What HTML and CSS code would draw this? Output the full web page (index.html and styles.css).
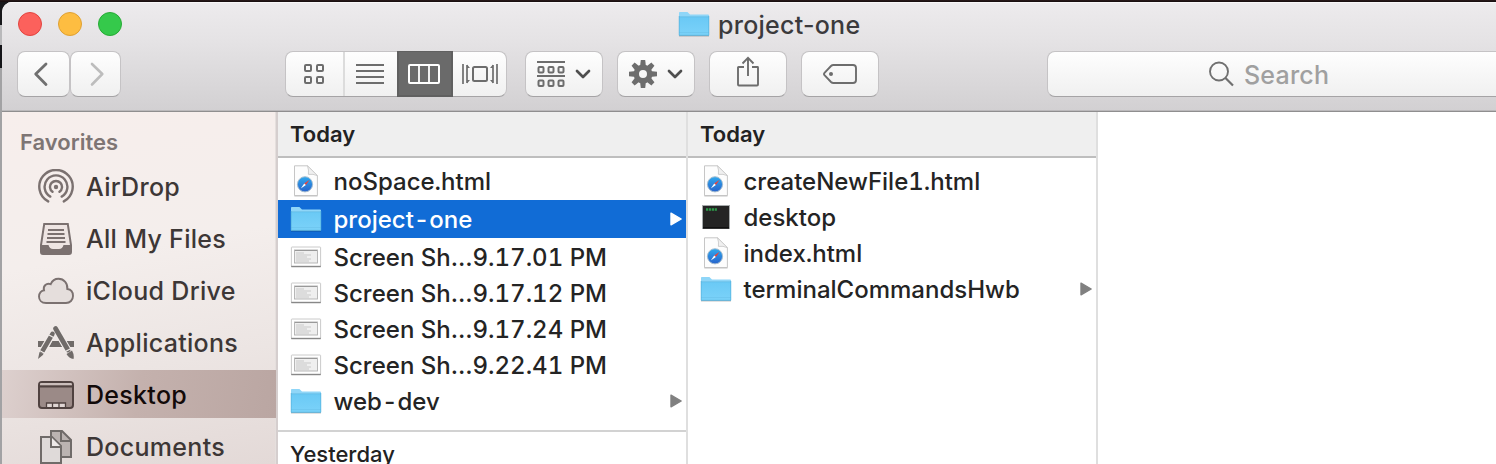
FILE: index.html
```
<!DOCTYPE html>
<html lang="en">
<head>
<meta charset="utf-8">
<title>project-one</title>
<link rel="stylesheet" href="styles.css">
</head>
<body>
<svg class="defs" width="0" height="0" aria-hidden="true">
  <defs>
    <linearGradient id="folderFill" x1="0" y1="0" x2="0" y2="1"><stop offset="0" stop-color="#6ac9f5"/><stop offset="1" stop-color="#7bd2f9"/></linearGradient>
    <linearGradient id="compassFill" x1="0" y1="0" x2="0" y2="1"><stop offset="0" stop-color="#2fa9ee"/><stop offset="1" stop-color="#2763cc"/></linearGradient>
  </defs>
  <symbol id="folder" viewBox="0 0 32 26">
    <path d="M1 24.5V1.8Q1 1 1.800 1H9.400L12 3.600H30Q31 3.600 31 4.600V24.500Z" fill="#8fd6f8"/>
    <path d="M1 6H31V24Q31 24.600 30.400 24.600H1.600Q1 24.600 1 24Z" fill="url(#folderFill)"/>
    <path d="M1 5.800H31" stroke="#5cb9e4" stroke-width=".7"/>
    <path d="M1 21.600H31" stroke="#68c0ea" stroke-width=".6"/>
    <path d="M1.200 5V24.300H30.800V5" fill="none" stroke="#55b2dd" stroke-width=".7"/>
    <path d="M1 25.100H31" stroke="#000" stroke-opacity=".25" stroke-width=".8"/>
  </symbol>
  <symbol id="html" viewBox="0 0 32 32">
    <path d="M4.500 .8H17.500L27.400 10.600V30.600H4.500Z" fill="#fdfdfd" stroke="#c6c6c6" stroke-width="1"/>
    <path d="M17.500 .8Q19 5 18.400 9.400Q23 8.700 27.400 10.600Z" fill="#f0f0f0" stroke="#c9c9c9" stroke-width=".9"/>
    <path d="M4.400 31H27.500" stroke="#bbb" stroke-width=".8"/>
    <circle cx="15" cy="19.300" r="7.600" fill="url(#compassFill)" stroke="#a9bfd1" stroke-width="1"/>
    <path d="M19.600 14.800L15.900 20.100L14.200 18.400Z" fill="#e9433c"/>
    <path d="M10.800 23.600L14.200 18.400L15.900 20.100Z" fill="#fff"/>
  </symbol>
  <symbol id="terminal" viewBox="0 0 32 26">
    <rect x="2.500" y="1.500" width="27" height="23" fill="#242424" stroke="#a6aaab"/>
    <path d="M3 24H29" stroke="#0b0b0b" stroke-width="1.400"/>
    <path d="M6 5.500H17" stroke="#2d9b49" stroke-width="2.400" stroke-dasharray="2.200 .7"/>
  </symbol>
  <symbol id="shot" viewBox="0 0 32 22">
    <rect x="1.400" y="1" width="29.200" height="19.600" rx=".6" fill="#fff" stroke="#c4c4c4" stroke-width=".9"/>
    <path d="M1.200 20.500H30.800" stroke="#888" stroke-width="1.400"/>
    <rect x="4.500" y="4" width="23" height="13" fill="#efefef" stroke="#b0b0b0" stroke-width=".9"/>
    <path d="M5 4.500H27" stroke="#999" stroke-width="1"/>
    <path d="M6 7H14M6 9H21M6 11H17M6 13H21M6 15H19" stroke="#c9c9c9" stroke-width="1"/>
  </symbol>
  <symbol id="arrow" viewBox="0 0 12 14"><path d="M1 1.200V12.800L11.200 7Z" fill="currentColor" stroke="currentColor" stroke-width="1.400" stroke-linejoin="round"/></symbol>
  <symbol id="chev" viewBox="0 0 16 10"><path d="M2 2L8 8L14 2" fill="none" stroke="#4f4f4f" stroke-width="2.700" stroke-linecap="round" stroke-linejoin="round"/></symbol>
</svg>

<main class="window">
  <header class="chrome">
    <div class="titlebar">
      <div class="lights"><i class="light close"></i><i class="light min"></i><i class="light max"></i></div>
      <svg class="title-icon" width="32" height="26"><use href="#folder"/></svg>
      <h1 class="title">project-one</h1>
    </div>
    <div class="toolbar">
      <button class="btn back"><svg width="51" height="44" viewBox="0 0 51 44"><path d="M28 12L17.700 22L28 32.500" fill="none" stroke="#707070" stroke-width="2.800" stroke-linecap="round" stroke-linejoin="round"/></svg></button>
      <button class="btn forward"><svg width="49" height="44" viewBox="0 0 49 44"><path d="M21 12L31.300 22L21 32.500" fill="none" stroke="#bdbdbd" stroke-width="2.600" stroke-linecap="round" stroke-linejoin="round"/></svg></button>
      <div class="segments">
        <span class="seg s1"><svg width="22" height="22" viewBox="0 0 22 22" fill="none" stroke="#6d6d6d" stroke-width="2"><rect x="2" y="2" width="6" height="6" rx="1"/><rect x="14" y="2" width="6" height="6" rx="1"/><rect x="2" y="14" width="6" height="6" rx="1"/><rect x="14" y="14" width="6" height="6" rx="1"/></svg></span>
        <span class="seg s2"><svg width="28" height="20" viewBox="0 0 28 20" stroke="#6d6d6d" stroke-width="2"><path d="M0 1H28M0 7H28M0 13H28M0 19H28"/></svg></span>
        <span class="seg s3"><svg width="32" height="20" viewBox="0 0 32 20" fill="none" stroke="#fff" stroke-width="2"><rect x="1" y="1" width="30" height="18" rx="1"/><path d="M11 1V19M21 1V19" stroke-width="1.800"/></svg></span>
        <span class="seg s4"><svg width="36" height="20" viewBox="0 0 36 20" fill="none" stroke="#6d6d6d" stroke-width="2"><path d="M1 0V20M5 1V19M31 1V19M35 0V20" stroke-width="1.700"/><path d="M5 .5L8 4H5ZM5 19.500L8 16H5ZM31 .5L28 4H31ZM31 19.500L28 16H31Z" fill="#6d6d6d" stroke="none"/><rect x="11" y="3" width="14" height="14" rx="1.500"/></svg></span>
      </div>
      <button class="btn wide arrange"><svg width="28" height="26" viewBox="0 0 28 26" fill="none" stroke="#6d6d6d" stroke-width="2"><path d="M0 1H28M0 15H28"/><rect x="1.500" y="6" width="5" height="5.500" rx="1"/><rect x="11.500" y="6" width="5" height="5.500" rx="1"/><rect x="21.500" y="6" width="5" height="5.500" rx="1"/><rect x="1.500" y="19.500" width="5" height="5.500" rx="1"/><rect x="11.500" y="19.500" width="5" height="5.500" rx="1"/><rect x="21.500" y="19.500" width="5" height="5.500" rx="1"/></svg><svg width="16" height="10"><use href="#chev"/></svg></button>
      <button class="btn wide action"><svg width="28" height="28" viewBox="-14 -14 28 28"><g fill="#6d6d6d"><path id="tooth" d="M-3 -7L-2.200 -14H2.200L3 -7Z"/><use href="#tooth" transform="rotate(45)"/><use href="#tooth" transform="rotate(90)"/><use href="#tooth" transform="rotate(135)"/><use href="#tooth" transform="rotate(180)"/><use href="#tooth" transform="rotate(225)"/><use href="#tooth" transform="rotate(270)"/><use href="#tooth" transform="rotate(315)"/></g><circle r="6.700" fill="none" stroke="#6d6d6d" stroke-width="5.400"/></svg><svg width="16" height="10"><use href="#chev"/></svg></button>
      <button class="btn wide share"><svg width="24" height="32" viewBox="0 0 24 32" fill="none" stroke="#6d6d6d" stroke-width="1.900"><path d="M8 11H2.500Q2 11 2 11.500V28.500Q2 29.500 3 29.500H21Q22 29.500 22 28.500V11.500Q22 11 21.500 11H16M12 20V2M6.500 7.500L12 1.800L17.500 7.500"/></svg></button>
      <button class="btn wide tag"><svg width="34" height="20" viewBox="0 0 34 20" fill="none" stroke="#6d6d6d" stroke-width="1.900"><path d="M10.500 1H30Q33 1 33 4V16Q33 19 30 19H10.500Q9 19 8 18L1.500 11.200Q.5 10 1.500 8.800L8 2Q9 1 10.500 1Z"/><circle cx="8" cy="10" r="2" fill="#6d6d6d" stroke="none"/></svg></button>
      <div class="search"><svg width="25" height="26" viewBox="0 0 25 26" fill="none" stroke="#707070" stroke-width="1.900"><circle cx="10" cy="10.500" r="9"/><path d="M16.500 17L24 24.500" stroke-width="2.200"/></svg><span>Search</span></div>
    </div>
  </header>

  <div class="body">
    <nav class="sidebar">
      <h2>Favorites</h2>
      <a class="side"><svg width="36" height="36" viewBox="0 0 36 36" fill="none" stroke="#7b7170" stroke-width="2.400" stroke-linecap="round"><circle cx="18" cy="18" r="2.200" fill="#7b7170" stroke="none"/><path d="M14.500 22.800A6 6 0 1 1 21.500 22.800M12.300 27.600A11.400 11.400 0 1 1 23.700 27.600M10.200 32.400A16.700 16.700 0 1 1 25.800 32.400"/></svg>AirDrop</a>
      <a class="side"><svg width="36" height="36" viewBox="0 0 36 36"><path d="M6.200 3H29.800L33 24V31Q33 33 31 33H5Q3 33 3 31V24Z" fill="#eee5e3" stroke="#7b7170" stroke-width="2"/><path d="M3 24H10.500Q11.500 28 15 28H21Q24.500 28 25.500 24H33V31Q33 33 31 33H5Q3 33 3 31Z" fill="#7b7170"/><path d="M10 9H26M9.500 13H26.500M9 17H27M8.500 21H27.500" stroke="#7b7170" stroke-width="1.900"/></svg>All My Files</a>
      <a class="side"><svg width="36" height="36" viewBox="0 0 36 36"><path d="M8 30C3.500 30 1 27 1 23.500C1 20 3.500 17.500 6 17.300C4.800 13 8.500 9.500 12.700 11.200C14.500 7 17.500 5.800 20.500 5.800C26 5.800 30 10.500 29.300 16C33 16.500 35 19.500 35 22.900C35 27 32 30 28 30Z" fill="#e5dedc" stroke="#7b7170" stroke-width="1.900"/></svg>iCloud Drive</a>
      <a class="side"><svg width="36" height="36" viewBox="0 0 36 36"><path d="M0 16H36V22H0Z" fill="#706b69"/><path d="M8 16H28L32 23H4Z" fill="#f1ebe9"/><path d="M14 16H21L24.500 22H11Z" fill="#706b69"/><path d="M15.500 7L3.800 27.500M17.500 3.500L30.500 26" stroke="#f1ebe9" stroke-width="7"/><path d="M14.500 8.800L4.200 26.500" stroke="#706b69" stroke-width="4.500" stroke-linecap="round"/><path d="M17.500 3.500L30 25" stroke="#706b69" stroke-width="4.800" stroke-linecap="round"/><path d="M1.500 27L5.500 29.500L0 34ZM28.500 29L34 25.500Q36.500 30 35.500 34Q31 33.500 28.500 29Z" fill="#706b69"/><path d="M11 10L16.500 13M26.500 27L33 23.500M1.500 25.500L7 28.500" stroke="#f0ebe9" stroke-width="1.300"/></svg>Applications</a>
      <a class="side active"><svg width="36" height="36" viewBox="0 0 36 36"><rect x="1" y="5" width="34" height="26" rx="3" fill="#9b8a87" stroke="#504240" stroke-width="2"/><path d="M2 7Q2 6 3 6H33Q34 6 34 8H2Z" fill="#cbbebb"/><path d="M1 9.500H35" stroke="#504240" stroke-width="2"/><path d="M9 26H27V30H9Z" fill="#e0d5d3"/><path d="M8.500 31V26H27.500V31M14.500 26V30M21 26V30" fill="none" stroke="#504240" stroke-width="1.300"/></svg>Desktop</a>
      <a class="side"><svg width="36" height="36" viewBox="0 0 36 36" stroke="#706b69" stroke-width="2"><path d="M13 2H24L33 11V28H13Z" fill="#bbb3b1"/><path d="M23 2V12H33" fill="none"/><path d="M3 8H14L23 17V34H3Z" fill="#dfdad9"/><path d="M13 8V18H23" fill="#eee9e8"/></svg>Documents</a>
    </nav>

    <section class="column">
      <h2 class="group">Today</h2>
      <ul>
        <li><svg width="32" height="32"><use href="#html"/></svg><span>noSpace.html</span></li>
        <li class="selected"><svg width="32" height="26"><use href="#folder"/></svg><span>project-one</span><svg class="more" width="12" height="14"><use href="#arrow"/></svg></li>
        <li><svg width="32" height="22"><use href="#shot"/></svg><span class="shot">Screen Sh…9.17.01 PM</span></li>
        <li><svg width="32" height="22"><use href="#shot"/></svg><span class="shot">Screen Sh…9.17.12 PM</span></li>
        <li><svg width="32" height="22"><use href="#shot"/></svg><span class="shot">Screen Sh…9.17.24 PM</span></li>
        <li><svg width="32" height="22"><use href="#shot"/></svg><span class="shot">Screen Sh…9.22.41 PM</span></li>
        <li><svg width="32" height="26"><use href="#folder"/></svg><span>web-dev</span><svg class="more" width="12" height="14"><use href="#arrow"/></svg></li>
      </ul>
      <h2 class="group older">Yesterday</h2>
    </section>

    <section class="column">
      <h2 class="group">Today</h2>
      <ul>
        <li><svg width="32" height="32"><use href="#html"/></svg><span>createNewFile1.html</span></li>
        <li><svg width="32" height="26"><use href="#terminal"/></svg><span>desktop</span></li>
        <li><svg width="32" height="32"><use href="#html"/></svg><span>index.html</span></li>
        <li><svg width="32" height="26"><use href="#folder"/></svg><span>terminalCommandsHwb</span><svg class="more" width="12" height="14"><use href="#arrow"/></svg></li>
      </ul>
    </section>
    <section class="preview"></section>
  </div>
</main>
</body>
</html>
```
FILE: styles.css
```
* { box-sizing: border-box; }
html, body { margin: 0; height: 100%; overflow: hidden; }
body {
  padding: 2px 0 0 2px;
  background:
    linear-gradient(#2a1a1b, #140b0d) 0 0 / 100% 2px no-repeat,
    linear-gradient(#18181b 0 25px, #b9b9bb 25px 45px, #141418 45px 68px, #a2a2a4 68px) 0 0 / 20px 100% no-repeat,
    #2a1a1b;
  font-family: Inter, "Liberation Sans", sans-serif;
  color: #222;
}
.defs { position: absolute; }
svg { display: block; flex: none; }
h1, h2, ul { margin: 0; padding: 0; font-weight: 400; }

.window { height: 462px; display: flex; flex-direction: column; border-top-left-radius: 10px; overflow: hidden; background: #fff; }
.chrome {
  height: 110px; flex: none;
  background: linear-gradient(#edebed, #e5e3e5 35%, #d2d0d2);
  border-bottom: 1px solid #8f8e8f;
  box-shadow: inset 0 1px #f8f7f8, inset 0 -1px #bbb9bb;
}
.titlebar { height: 49px; display: flex; align-items: flex-start; padding: 10px 0 0 16px; }
.lights { display: flex; gap: 16px; width: 660px; }
.light { width: 24px; height: 24px; border-radius: 50%; border: 1px solid; }
.close { background: #fc615c; border-color: #e2443f; }
.min { background: #fdbd41; border-color: #dfa033; }
.max { background: #35c94b; border-color: #27aa35; }
.title-icon { margin-top: -1px; }
.title { margin-left: 8px; font-size: 25px; line-height: 30px; margin-top: -2px; color: #3b3a3c; letter-spacing: .25px; font-weight: 450; }

.toolbar { display: flex; padding-left: 15px; overflow: hidden; }
.btn, .segments, .search {
  height: 46px; flex: none; padding: 0; border: 1px solid #c5c3c5; border-bottom-color: #a5a3a5; border-radius: 8px;
  background: linear-gradient(#fefefe, #f0f0f0); display: flex; align-items: center; justify-content: center;
}
.back { width: 53px; }
.forward { width: 51px; }
.segments { width: 222px; margin-left: 164px; justify-content: flex-start; }
.seg { height: 44px; display: flex; align-items: center; justify-content: center; }
.s1 { width: 59px; border-right: 2px solid #dcdcdc; padding-right: 1px; }
.s2 { width: 52px; padding-right: 2px; }
.s3 { width: 56px; height: 46px; margin: -1px 0; background: #6a6a6a; border: 2px solid #606060; border-top-width: 1px; padding-right: 2px; }
.s4 { width: 53px; }
.wide { width: 78px; margin-left: 14px; }
.arrange { margin-left: 18px; gap: 10px; }
.action { gap: 10px; }
.share svg { margin-top: -4px; }
.search { width: 480px; margin-left: 168px; justify-content: flex-start; padding-left: 161px; color: #a0a0a0; font-size: 25px; letter-spacing: .2px; gap: 10px; }
.search span { margin-top: 2px; font-weight: 450; }

.body { display: flex; flex: 1; min-height: 0; }
.sidebar {
  width: 276px; flex: none; border-right: 2px solid #d5cece; overflow: hidden;
  background: linear-gradient(170deg, #f7eeec 0, #f4eeec 40%, #ece5e3 70%, #e3d9d7 100%);
  box-shadow: inset -1px 0 #e5dfdd;
}
.sidebar h2 { font-size: 22px; line-height: 28px; font-weight: 600; color: #7e7574; margin: 16px 0 6px 18px; }
.side { display: flex; align-items: center; height: 48px; margin-bottom: 4px; padding: 1px 0 0 36px; gap: 12px; font-size: 25px; letter-spacing: .3px; font-weight: 450; color: #3d3736; white-space: nowrap; }
.active { background: linear-gradient(100deg, #ddd0ce, #c4b1ad 50%, #baa6a2); color: #120a09; }

.column { width: 410px; flex: none; border-right: 2px solid #dfdfdf; overflow: hidden; }
.group { height: 46px; border-bottom: 2px solid #bebebe; background: #efefef; padding-left: 12px; font-size: 22px; line-height: 45px; font-weight: 600; }
ul { list-style: none; padding-top: 5px; }
li { display: flex; align-items: center; height: 36px; padding: 0 4px 0 12px; font-size: 24px; font-weight: 450; font-variant-numeric: tabular-nums; color: #242424; white-space: nowrap; }
li span { margin-left: 11.5px; }
.selected { height: 38px; margin: 1px 0; background: #116cd6; color: #fff; }
.more { margin-left: auto; color: #808080; }
.selected .more { color: #fff; }
.older { margin-top: 11px; border-top: 2px solid #d2d2d2; border-bottom: 0; background: #fff; font-weight: 450; }
.preview { flex: 1; background: #fff; }
```
